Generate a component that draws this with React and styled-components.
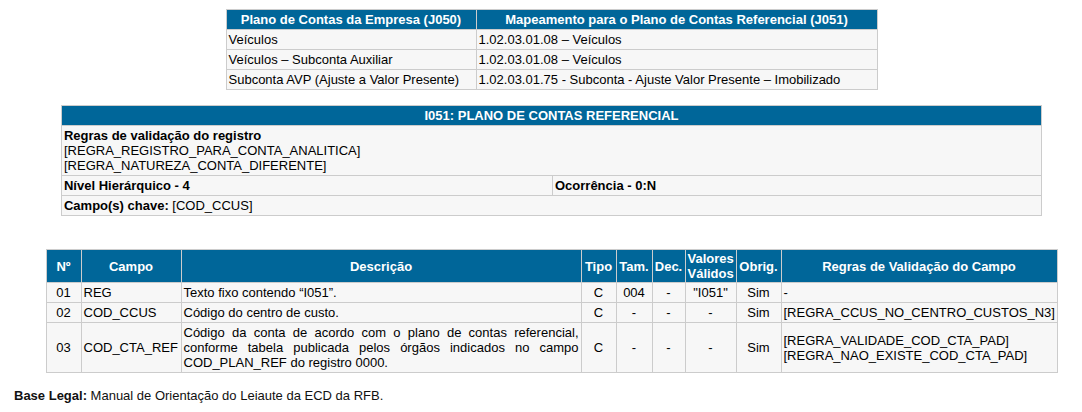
import React from 'react'
import styled, { createGlobalStyle } from 'styled-components'

const GlobalStyle = createGlobalStyle`
  body {
    margin: 0;
    background: #fff;
    font-family: 'Liberation Sans', Arial, sans-serif;
    font-size: 13px;
    color: #000;
  }
`

export const Page = styled.div`
  width: 1075px;
  padding: 9px 0 0 14px;
`

export const Table = styled.table`
  border-collapse: collapse;
  table-layout: fixed;
  width: ${p => p.width}px;
  margin: 0 auto ${p => p.gap || 0}px;
  background: #f7f7f7;
  font-size: 13px;
  line-height: 15px;

  td, th {
    border: 1px solid #cccccc;
    padding: 2px 2px;
    vertical-align: middle;
  }

  th {
    background: #006699;
    color: #fff;
    font-weight: bold;
    text-align: center;
  }
`

export const HeadRow = styled.tr`
  th {
    height: ${p => p.height || 15}px;
    padding: ${p => (p.tight ? '1px 2px' : '2px 2px')};
  }
`

export const Cell = styled.td`
  text-align: ${p => p.align || 'left'};
  font-weight: ${p => (p.bold ? 'bold' : 'normal')};
`

export const Label = styled.b`
  font-weight: bold;
`

export const Footer = styled.p`
  margin: 0;
  padding-top: 15px;
  line-height: 15px;
  color: #111;
`

const mapping = [
  ['Veículos', '1.02.03.01.08 – Veículos'],
  ['Veículos – Subconta Auxiliar', '1.02.03.01.08 – Veículos'],
  ['Subconta AVP (Ajuste a Valor Presente)', '1.02.03.01.75 - Subconta - Ajuste Valor Presente – Imobilizado'],
]

const campos = [
  {
    n: '01', campo: 'REG', desc: 'Texto fixo contendo “I051”.',
    tipo: 'C', tam: '004', dec: '-', val: '"I051"', obrig: 'Sim', regras: ['-'],
  },
  {
    n: '02', campo: 'COD_CCUS', desc: 'Código do centro de custo.',
    tipo: 'C', tam: '-', dec: '-', val: '-', obrig: 'Sim', regras: ['[REGRA_CCUS_NO_CENTRO_CUSTOS_N3]'],
  },
  {
    n: '03', campo: 'COD_CTA_REF',
    desc: 'Código da conta de acordo com o plano de contas referencial, conforme tabela publicada pelos órgãos indicados no campo COD_PLAN_REF do registro 0000.',
    tipo: 'C', tam: '-', dec: '-', val: '-', obrig: 'Sim',
    regras: ['[REGRA_VALIDADE_COD_CTA_PAD]', '[REGRA_NAO_EXISTE_COD_CTA_PAD]'],
  },
]

const colWidths = [35, 100, 400, 35, 36, 33, 51, 45, 276]

export default function App() {
  return (
    <Page>
      <GlobalStyle />

      <Table width={651} gap={15}>
        <colgroup>
          <col style={{ width: 250 }} />
          <col style={{ width: 401 }} />
        </colgroup>
        <thead>
          <HeadRow>
            <th>Plano de Contas da Empresa (J050)</th>
            <th>Mapeamento para o Plano de Contas Referencial (J051)</th>
          </HeadRow>
        </thead>
        <tbody>
          {mapping.map(([a, b]) => (
            <tr key={a}>
              <Cell>{a}</Cell>
              <Cell>{b}</Cell>
            </tr>
          ))}
        </tbody>
      </Table>

      <Table width={980} gap={33}>
        <colgroup>
          <col style={{ width: 491 }} />
          <col style={{ width: 489 }} />
        </colgroup>
        <thead>
          <HeadRow>
            <th colSpan={2}>I051: PLANO DE CONTAS REFERENCIAL</th>
          </HeadRow>
        </thead>
        <tbody>
          <tr>
            <Cell colSpan={2}>
              <Label>Regras de validação do registro</Label>
              <br />[REGRA_REGISTRO_PARA_CONTA_ANALITICA]
              <br />[REGRA_NATUREZA_CONTA_DIFERENTE]
            </Cell>
          </tr>
          <tr>
            <Cell bold>Nível Hierárquico - 4</Cell>
            <Cell bold>Ocorrência - 0:N</Cell>
          </tr>
          <tr>
            <Cell colSpan={2}>
              <Label>Campo(s) chave:</Label> [COD_CCUS]
            </Cell>
          </tr>
        </tbody>
      </Table>

      <Table width={1011}>
        <colgroup>
          {colWidths.map((w, i) => (
            <col key={i} style={{ width: w }} />
          ))}
        </colgroup>
        <thead>
          <HeadRow height={30} tight>
            <th>Nº</th>
            <th>Campo</th>
            <th>Descrição</th>
            <th>Tipo</th>
            <th>Tam.</th>
            <th>Dec.</th>
            <th>Valores Válidos</th>
            <th>Obrig.</th>
            <th>Regras de Validação do Campo</th>
          </HeadRow>
        </thead>
        <tbody>
          {campos.map(c => (
            <tr key={c.n}>
              <Cell align="center">{c.n}</Cell>
              <Cell>{c.campo}</Cell>
              <Cell align="justify">{c.desc}</Cell>
              <Cell align="center">{c.tipo}</Cell>
              <Cell align="center">{c.tam}</Cell>
              <Cell align="center">{c.dec}</Cell>
              <Cell align="center">{c.val}</Cell>
              <Cell align="center">{c.obrig}</Cell>
              <Cell>
                {c.regras.map((r, i) => (
                  <React.Fragment key={r}>
                    {i > 0 && <br />}
                    {r}
                  </React.Fragment>
                ))}
              </Cell>
            </tr>
          ))}
        </tbody>
      </Table>

      <Footer>
        <Label>Base Legal:</Label> Manual de Orientação do Leiaute da ECD da RFB.
      </Footer>
    </Page>
  )
}
